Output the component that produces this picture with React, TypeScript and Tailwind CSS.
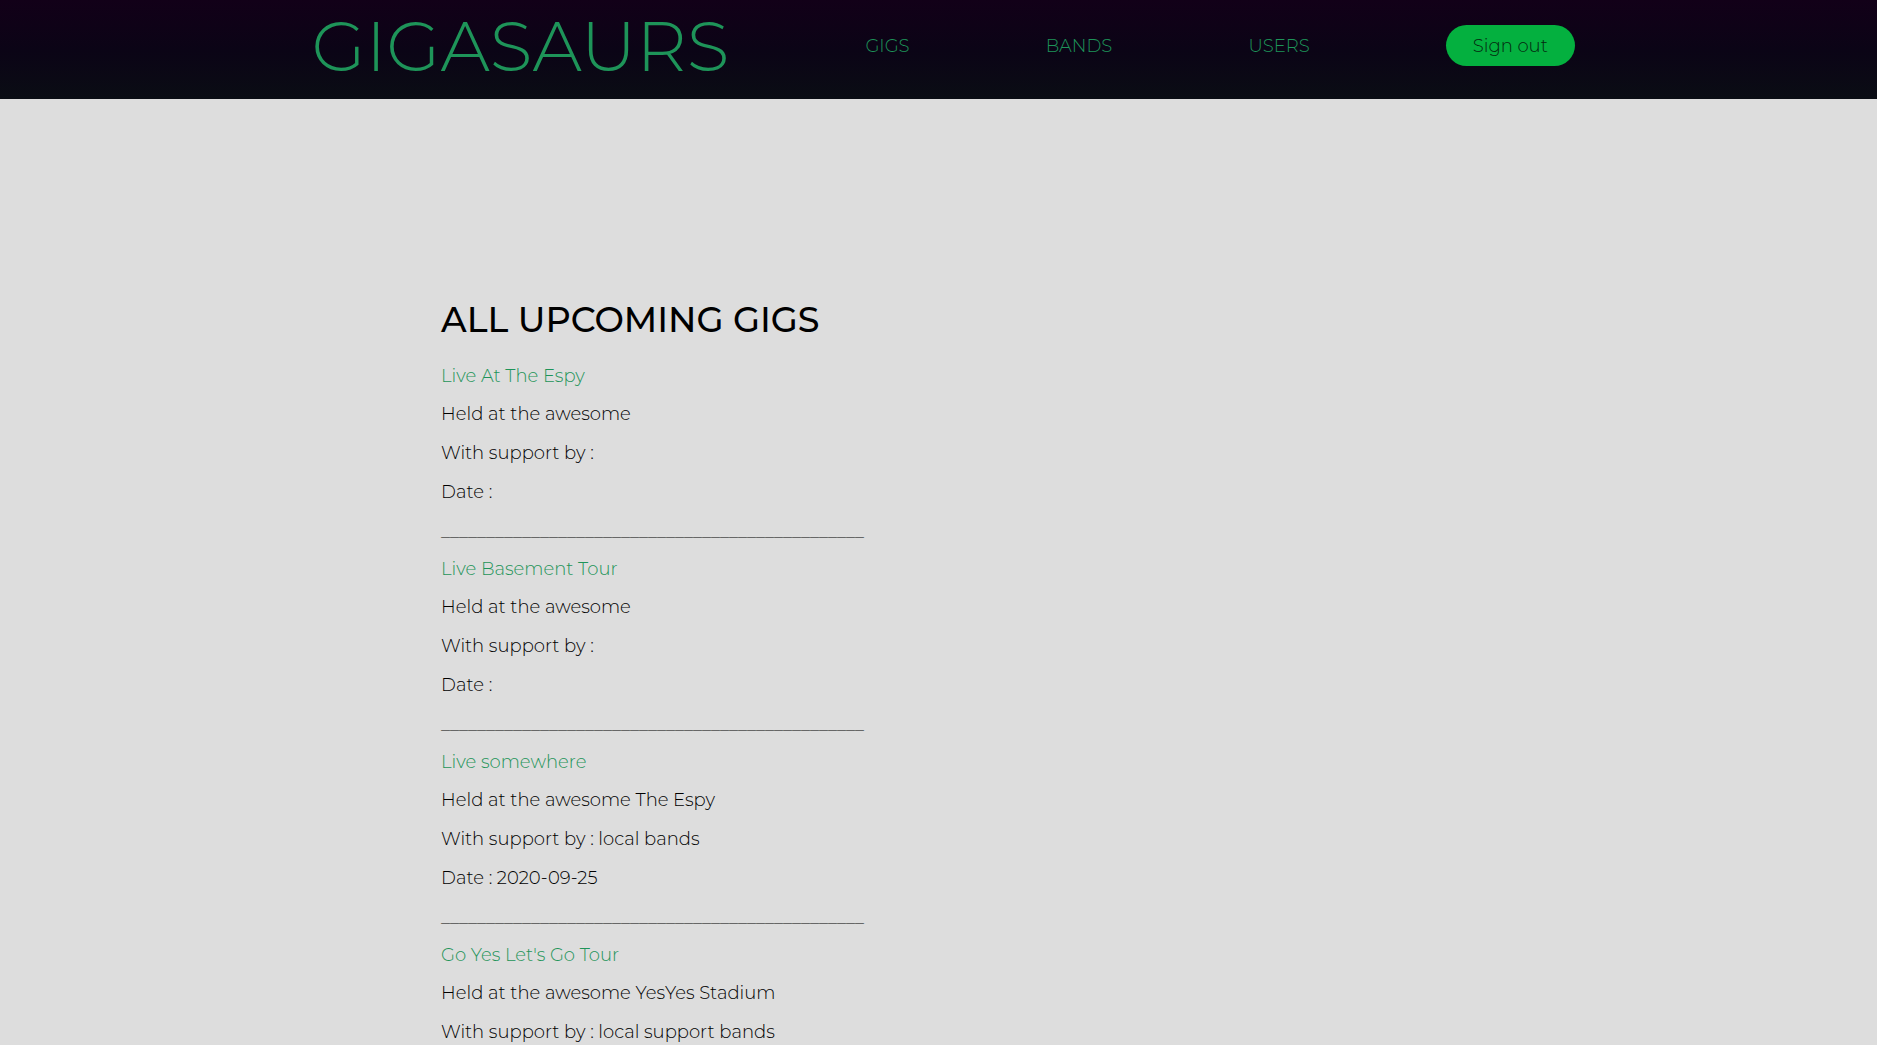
type Gig = { title: string; venue: string; support: string; date: string };

const gigs: Gig[] = [
  { title: "Live At The Espy", venue: "", support: "", date: "" },
  { title: "Live Basement Tour", venue: "", support: "", date: "" },
  { title: "Live somewhere", venue: "The Espy", support: "local bands", date: "2020-09-25" },
  { title: "Go Yes Let's Go Tour", venue: "YesYes Stadium", support: "local support bands", date: "" },
];

const links = ["GIGS", "BANDS", "USERS"];

function Header() {
  return (
    <header className="flex h-[99px] items-center justify-between bg-linear-to-b from-[#120018] via-[#0b0416] to-[#0a0d14] pb-2 pl-[16.6%] pr-[16.1%] text-lg text-[#1e9459]">
      <a href="#home" className="text-[70px] leading-[80px]">GIGASAURS</a>
      {links.map((label) => (
        <a key={label} href={"#" + label.toLowerCase()}>
          {label}
        </a>
      ))}
      <button type="button" className="h-[41px] w-[129px] rounded-full bg-[#04b03f] text-lg font-light text-[#05280f]">
        Sign out
      </button>
    </header>
  );
}

function GigItem({ gig }: { gig: Gig }) {
  return (
    <li className="flex flex-col items-start gap-[18px] leading-[21px] whitespace-nowrap">
      <a href="#gig" className="leading-[19px] text-[#1e9459]">{gig.title}</a>
      <p>{`Held at the awesome ${gig.venue}`}</p>
      <p>{`With support by : ${gig.support}`}</p>
      <p>{`Date : ${gig.date}`}</p>
      <p>{"_".repeat(47)}</p>
    </li>
  );
}

export default function App() {
  return (
    <div className="min-h-screen bg-[#dddddd] font-['Montserrat','Inter',sans-serif] font-light text-black">
      <Header />
      <main className="pt-[196px] pb-10 pl-[23.5%]">
        <h1 className="mb-[22px] text-[35px] leading-[50px] font-medium">ALL UPCOMING GIGS</h1>
        <ul className="flex flex-col gap-[18px] text-lg">
          {gigs.map((gig) => (
            <GigItem key={gig.title} gig={gig} />
          ))}
        </ul>
      </main>
    </div>
  );
}
